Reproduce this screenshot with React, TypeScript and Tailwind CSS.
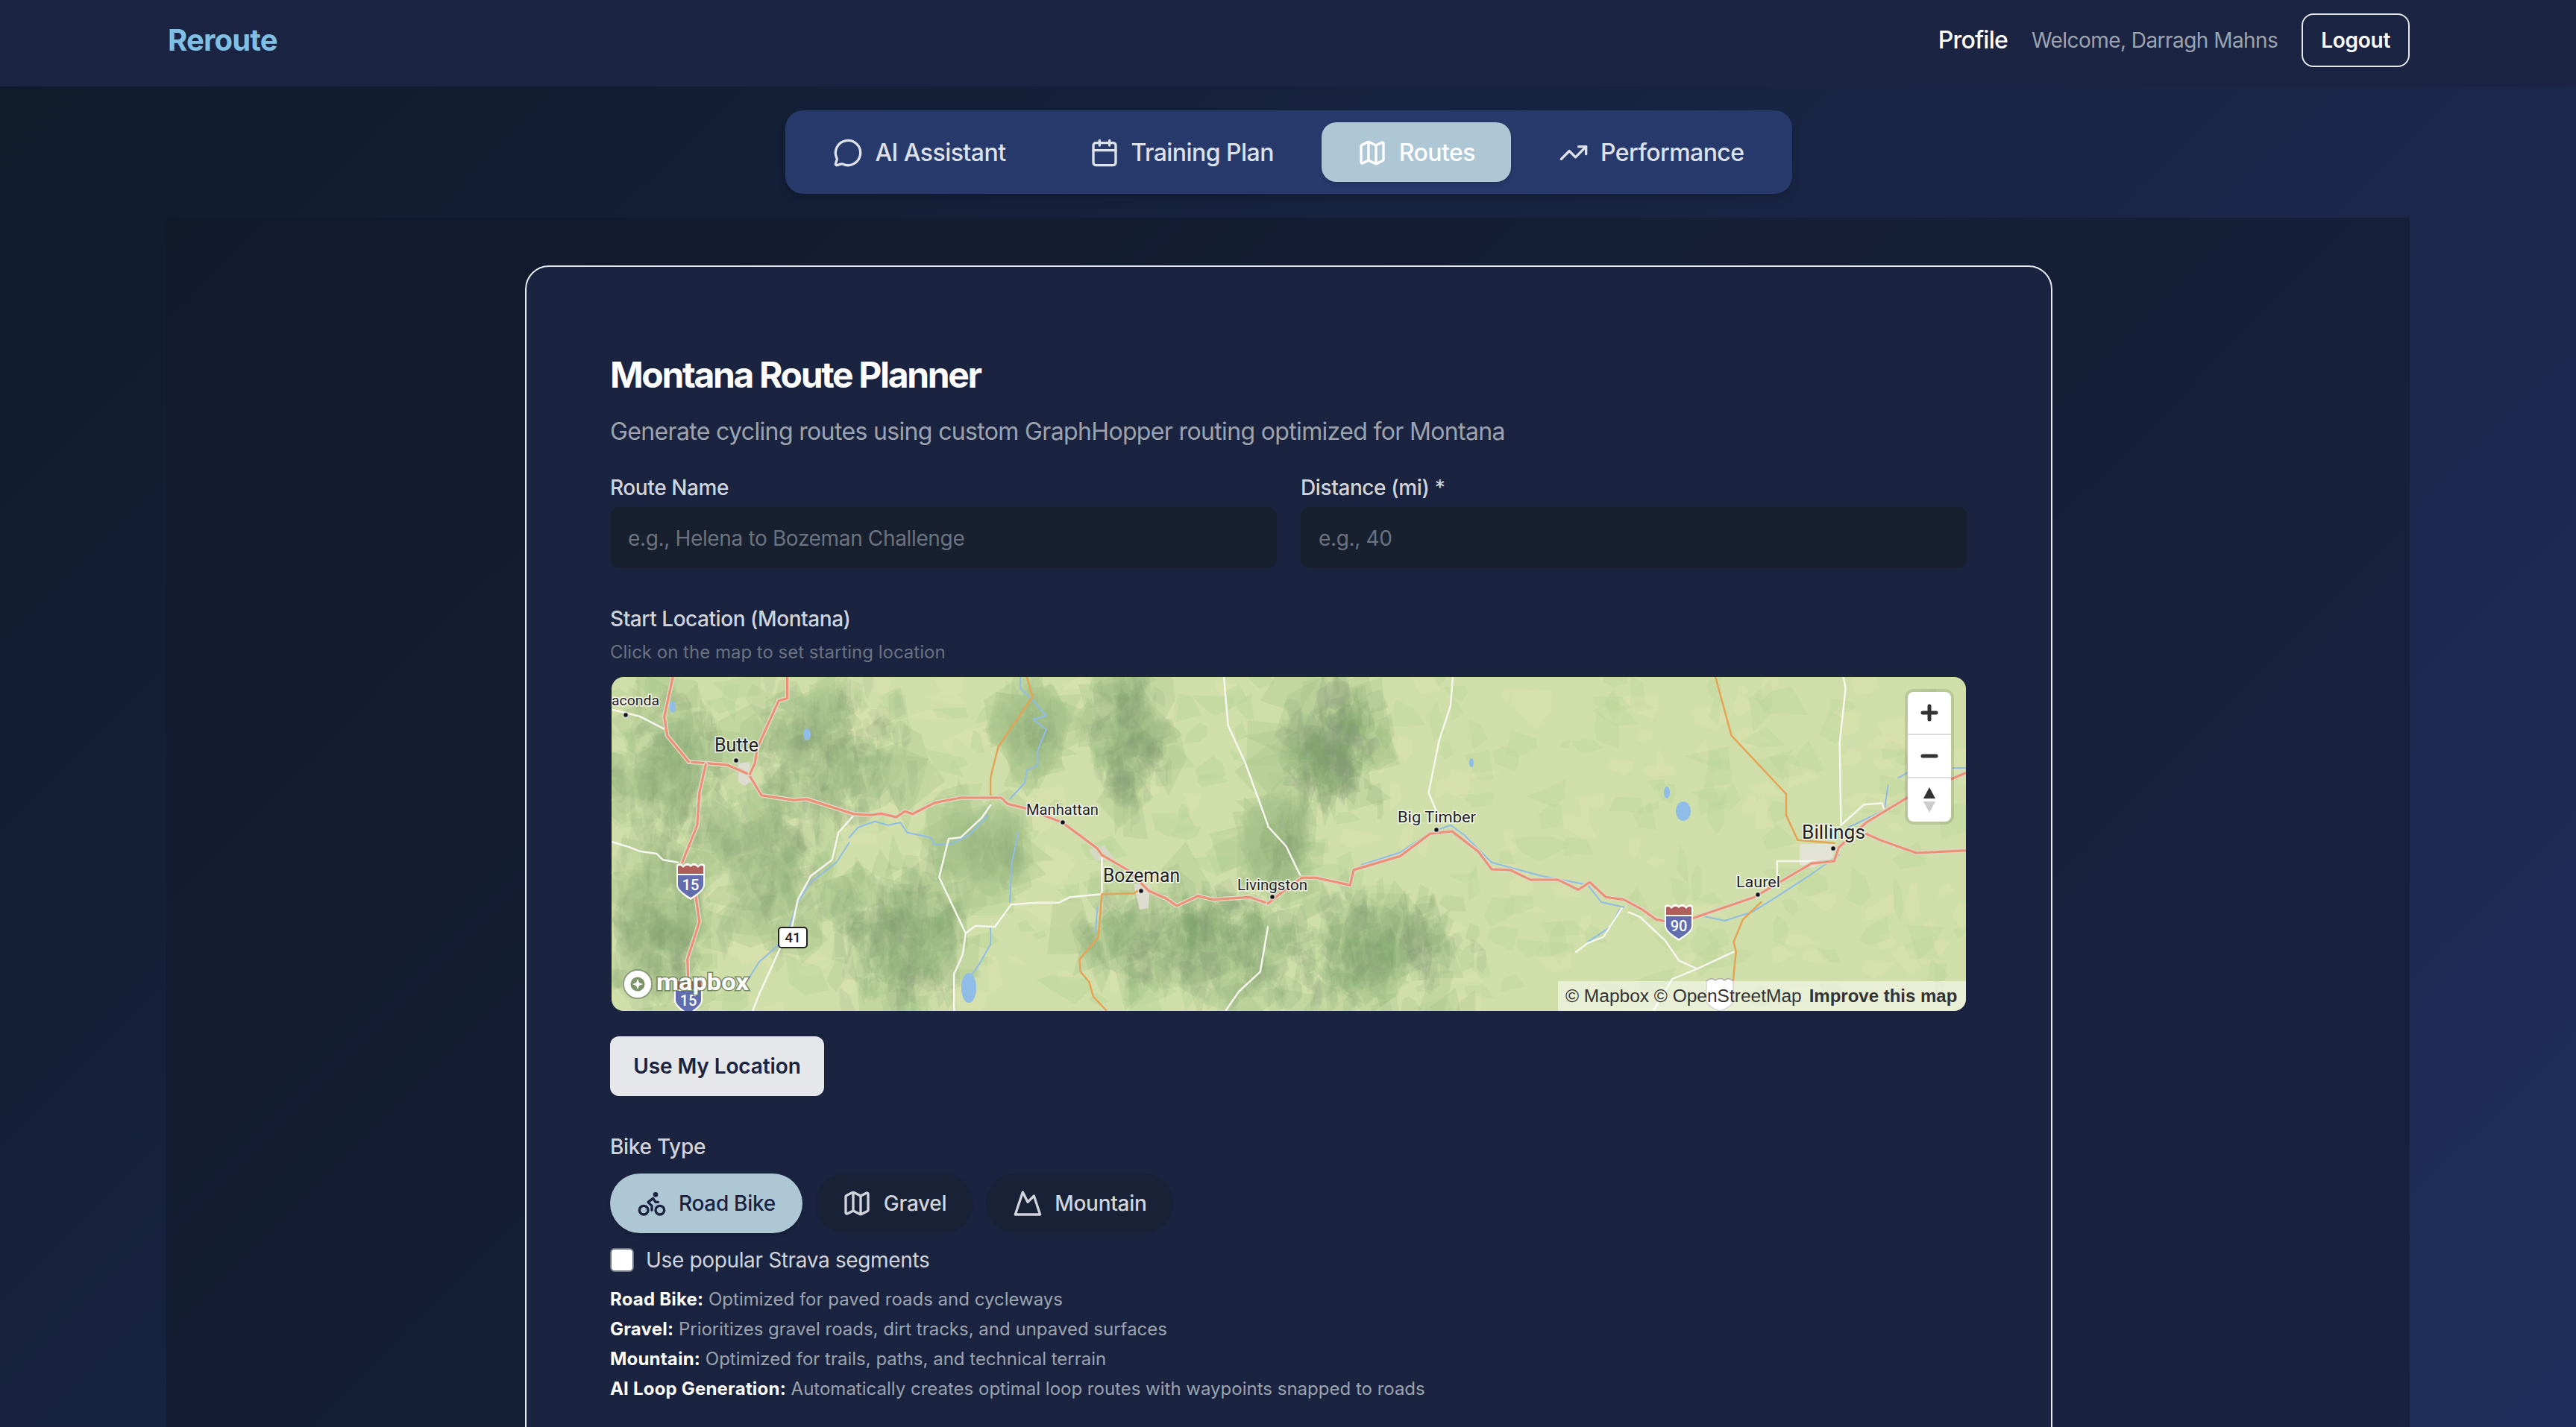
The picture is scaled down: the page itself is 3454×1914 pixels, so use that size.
import React, { useMemo } from 'react'
import { Bike, Calendar, Map as MapIcon, MessageCircle, Mountain, TrendingUp } from 'lucide-react'

type Pt = [number, number]

// the road traces were read off two crops of the map, so each gets its own scale
const west = (pts: Pt[]) => pts.map(([x, y]) => `${(x / 1.742 - 20).toFixed(1)},${(y / 3 - 18).toFixed(1)}`).join(' ')
const east = (pts: Pt[]) => pts.map(([x, y]) => `${(880 + x / 1.633).toFixed(1)},${(y / 3 - 18).toFixed(1)}`).join(' ')

const motorways = [
  west([[215, 395], [305, 408], [355, 445], [385, 530], [460, 550], [490, 545], [600, 605], [640, 610], [665, 604], [700, 618], [720, 595], [738, 605], [790, 560], [850, 540], [945, 540], [960, 565], [1003, 583], [1088, 640], [1170, 745], [1180, 770], [1240, 830], [1290, 915], [1330, 945], [1355, 975], [1405, 935], [1440, 950], [1525, 940], [1568, 965]]),
  east([[0, 965], [35, 915], [75, 862], [105, 862], [180, 892], [188, 830], [290, 775], [355, 685], [403, 675], [460, 755], [490, 828], [530, 830], [575, 870], [635, 870], [680, 910], [705, 880], [740, 940], [780, 950], [820, 990], [850, 1030], [905, 1050], [930, 1025], [1065, 940], [1190, 805], [1240, 795], [1250, 740], [1310, 640], [1400, 540], [1528, 440]]),
  east([[1310, 685], [1340, 710], [1420, 762], [1528, 752]]),
  west([[178, 54], [158, 215], [165, 290], [215, 395]]),
  west([[445, 54], [445, 140], [425, 150], [375, 340], [370, 400], [358, 445]]),
  west([[255, 405], [240, 520], [235, 650], [200, 800]]),
  west([[230, 915], [240, 1040], [212, 1190], [215, 1320]]),
]

const secondary = [
  west([[1005, 54], [1018, 135], [938, 335], [920, 460], [920, 540]]),
  west([[1272, 905], [1255, 925], [1180, 928], [1172, 1100], [1128, 1190], [1130, 1240], [1150, 1280], [1160, 1340], [1190, 1395]]),
  east([[980, 54], [1015, 290], [1135, 525], [1135, 610], [1160, 710], [1240, 722]]),
  east([[1080, 960], [1040, 1030], [1020, 1120], [1025, 1160], [1018, 1290]]),
]

const minorRoads = [
  west([[36, 718], [75, 738], [100, 755], [140, 765], [155, 790], [190, 800]]),
  west([[36, 185], [100, 212], [160, 265]]),
  west([[600, 612], [565, 680], [550, 790], [500, 855], [470, 950], [455, 1070], [430, 1140], [380, 1330], [365, 1395]]),
  west([[920, 570], [900, 620], [850, 700], [822, 705], [800, 860], [862, 1085], [855, 1170], [835, 1250], [835, 1395]]),
  west([[862, 1085], [885, 1055], [930, 1060], [968, 970], [1030, 962], [1080, 962], [1105, 940], [1180, 928]]),
  west([[1180, 770], [1180, 928]]),
  west([[1465, 54], [1475, 250], [1515, 400], [1568, 650]]),
  west([[1568, 1060], [1550, 1240], [1500, 1320], [1470, 1395]]),
  east([[405, 54], [400, 170], [375, 310], [352, 520], [368, 590]]),
  east([[0, 655], [40, 735], [70, 850]]),
  east([[675, 1160], [700, 1125], [735, 1100], [775, 985]]),
  east([[790, 1000], [815, 1020], [870, 1115], [900, 1195], [940, 1228], [1020, 1160]]),
  east([[940, 1228], [885, 1270], [845, 1395]]),
  east([[1260, 54], [1265, 100], [1252, 320], [1255, 650]]),
  east([[1255, 650], [1305, 568], [1345, 562], [1350, 590]]),
  east([[1115, 880], [1115, 795], [1240, 795]]),
]

const rivers = [
  west([[990, 54], [990, 100], [1020, 150], [1050, 210], [1020, 225], [1050, 265], [1030, 350], [1030, 410], [1005, 430], [1000, 480], [965, 545]]),
  west([[590, 700], [610, 660], [650, 635], [680, 650], [710, 640], [725, 680], [780, 700], [790, 730], [830, 725], [870, 690], [915, 610]]),
  west([[590, 720], [560, 800], [500, 880], [470, 960], [450, 1060], [420, 1140], [380, 1200], [350, 1280]]),
  west([[985, 680], [970, 800], [965, 960]]),
  west([[1170, 980], [1165, 1080]]),
  west([[920, 1060], [920, 1130], [890, 1220], [860, 1290]]),
  east([[205, 810], [290, 760], [355, 680], [400, 650], [430, 690], [490, 800], [540, 825], [600, 855], [700, 890], [730, 960], [780, 980]]),
  east([[950, 1015], [1000, 1035], [1060, 1000], [1100, 955], [1180, 860], [1250, 770]]),
  east([[1270, 660], [1350, 590], [1358, 490]]),
  east([[1380, 460], [1400, 440]]),
  east([[1500, 420], [1528, 420]]),
  east([[700, 1120], [750, 1060], [770, 990]]),
]

const cities = [
  { name: 'aconda', x: 0, y: 38, size: 19, w: 64, dot: [19, 51] },
  { name: 'Butte', x: 138, y: 100, size: 25, w: 59, dot: [167, 112] },
  { name: 'Manhattan', x: 556, y: 185, size: 21, w: 97, dot: [605, 195] },
  { name: 'Bozeman', x: 659, y: 275, size: 25, w: 103, dot: [710, 287] },
  { name: 'Livingston', x: 839, y: 286, size: 21, w: 94, dot: [886, 295] },
  { name: 'Big Timber', x: 1054, y: 195, size: 21, w: 105, dot: [1106, 205] },
  { name: 'Billings', x: 1596, y: 217, size: 25, w: 85, dot: [1638, 230] },
  { name: 'Laurel', x: 1508, y: 282, size: 21, w: 59, dot: [1537, 292] },
]

// mountain ranges: centre, spread, how many ridge facets and how dark
const ranges = [
  [70, 130, 85, 140, 110, 0.1],
  [60, 340, 80, 120, 100, 0.1],
  [300, 100, 110, 100, 130, 0.11],
  [215, 250, 80, 130, 90, 0.09],
  [385, 340, 90, 110, 150, 0.13],
  [695, 90, 60, 110, 90, 0.12],
  [965, 95, 75, 95, 140, 0.16],
  [770, 350, 150, 85, 180, 0.13],
  [1010, 370, 170, 90, 180, 0.13],
  [570, 70, 40, 60, 30, 0.08],
  [895, 225, 50, 60, 40, 0.08],
  [500, 230, 60, 50, 24, 0.06],
]

function buildTerrain() {
  let seed = 41
  const rnd = () => {
    seed = (seed * 16807) % 2147483647
    return seed / 2147483647
  }
  const facet = (cx: number, cy: number, rx: number, ry: number) => {
    const n = 4 + Math.floor(rnd() * 3)
    const pts: string[] = []
    for (let i = 0; i < n; i++) {
      const a = ((i + rnd() * 0.6) / n) * Math.PI * 2
      const r = 0.4 + rnd() * 0.8
      pts.push(`${(cx + Math.cos(a) * rx * r).toFixed(0)},${(cy + Math.sin(a) * ry * r).toFixed(0)}`)
    }
    return pts.join(' ')
  }
  const patches: { pts: string; fill: string; opacity: number }[] = []
  for (let i = 0; i < 420; i++) {
    const light = rnd() > 0.62
    const x = rnd() * 1816
    // the west of the map is greener than the plains in the east
    const green = x < 1000 ? 0.5 : 0.36
    patches.push({
      pts: facet(x, rnd() * 448, 10 + rnd() * 30, 8 + rnd() * 24),
      fill: light ? '#dbe0ae' : '#b9d699',
      opacity: light ? 0.4 : green,
    })
  }
  // soft base under each range, so the ridges sit on mid green and not on the plain
  for (const [cx, cy, rx, ry] of ranges) {
    for (let i = 0; i < 34; i++) {
      const gx = (rnd() + rnd() - 1) * rx * 1.1
      const gy = (rnd() + rnd() - 1) * ry * 1.1
      patches.push({ pts: facet(cx + gx, cy + gy, 22 + rnd() * 34, 24 + rnd() * 38), fill: '#a4c58b', opacity: 0.3 })
    }
  }
  for (const [cx, cy, rx, ry, count, dark] of ranges) {
    for (let i = 0; i < count; i++) {
      const gx = (rnd() + rnd() - 1) * rx
      const gy = (rnd() + rnd() - 1) * ry
      patches.push({
        pts: facet(cx + gx, cy + gy, 6 + rnd() * 16, 12 + rnd() * 26),
        fill: rnd() > 0.3 ? '#7f9f6c' : '#84917a',
        opacity: dark,
      })
    }
  }
  return patches
}

function Shield({ x, y, label }: { x: number; y: number; label: string }) {
  return (
    <g transform={`translate(${x} ${y})`}>
      <path d="M-19 -19 Q-14 -23 -10 -18 Q-5 -24 0 -19 Q5 -24 10 -18 Q14 -23 19 -19 V8 Q19 16 0 28 Q-19 16 -19 8 Z" fill="#fff" />
      <path d="M-17 -5 V8 Q-17 15 0 25 Q17 15 17 8 V-5 Z" fill="#626db0" />
      <path d="M-17 -7 V-17 Q-13 -20 -10 -15 Q-5 -21 0 -16 Q5 -21 10 -15 Q13 -20 17 -17 V-7 Z" fill="#b05e5c" />
      <text x="0" y="15" textAnchor="middle" fontSize="20" fontFamily="Roboto, sans-serif" fontWeight="500" fill="#fff">
        {label}
      </text>
    </g>
  )
}

function TerrainMap() {
  const patches = useMemo(buildTerrain, [])
  const line = 'fill-none [stroke-linejoin:round] [stroke-linecap:round]'
  return (
    <svg viewBox="0 0 1816 448" className="block h-[448px] w-[1816px]">
      <rect width="1816" height="448" fill="#d0dfa9" />
      {patches.map((p, i) => (
        <polygon key={i} points={p.pts} fill={p.fill} opacity={p.opacity} />
      ))}
      {rivers.map((pts, i) => (
        <polyline key={i} points={pts} className={line} stroke="#8fbde8" strokeWidth="2" />
      ))}
      <ellipse cx="262" cy="77" rx="5" ry="8" fill="#8fbde8" />
      <ellipse cx="479" cy="417" rx="10" ry="20" fill="#8fbde8" />
      <ellipse cx="1437" cy="180" rx="10" ry="13" fill="#8fbde8" />
      <ellipse cx="1415" cy="155" rx="4" ry="8" fill="#8fbde8" />
      <ellipse cx="1153" cy="115" rx="3" ry="6" fill="#8fbde8" />
      <ellipse cx="82" cy="40" rx="4" ry="8" fill="#8fbde8" />
      <polygon points="170,116 185,114 188,140 178,146 170,140" fill="#dcdcd0" />
      <polygon points="640,232 660,226 676,246 650,246" fill="#d6d8c6" />
      <polygon points="700,278 722,278 720,310 708,312" fill="#dcdcd0" />
      <polygon points="1593,224 1640,224 1638,242 1610,256 1593,252" fill="#e2e2d6" />
      {minorRoads.map((pts, i) => (
        <polyline key={i} points={pts} className={line} stroke="#f6f6ee" strokeWidth="2.5" />
      ))}
      {secondary.map((pts, i) => (
        <polyline key={i} points={pts} className={line} stroke="#e5a355" strokeWidth="2.5" />
      ))}
      {motorways.map((pts, i) => (
        <g key={i}>
          <polyline points={pts} className={line} stroke="#dcd6c4" strokeWidth="6" />
          <polyline points={pts} className={line} stroke="#ec8f73" strokeWidth="3" />
        </g>
      ))}
      <Shield x={106} y={271} label="15" />
      <Shield x={103} y={426} label="15" />
      <Shield x={1431} y={326} label="90" />
      <rect x="224" y="336" width="38" height="27" rx="4" fill="#fff" stroke="#222" strokeWidth="2" />
      <text x="243" y="356" textAnchor="middle" fontSize="19" fontFamily="Roboto, sans-serif" fontWeight="500" fill="#222">
        41
      </text>
      <path d="M1468 408 Q1474 402 1480 407 Q1487 402 1492 407 Q1498 402 1504 408 V432 Q1504 442 1486 448 Q1468 442 1468 432 Z" fill="#fff" stroke="#aaa" strokeWidth="1.5" />
      {cities.map((c) => (
        <g key={c.name}>
          <circle cx={c.dot[0]} cy={c.dot[1]} r="3.5" fill="#111" stroke="#fff" strokeOpacity="0.6" strokeWidth="2" />
          <text
            x={c.x}
            y={c.y}
            textLength={c.w}
            lengthAdjust="spacingAndGlyphs"
            fontSize={c.size}
            fontFamily="Roboto, sans-serif"
            fill="#222"
            stroke="#fff"
            strokeOpacity="0.8"
            strokeWidth="3"
            className="[paint-order:stroke]"
          >
            {c.name}
          </text>
        </g>
      ))}
      <circle cx="35" cy="412" r="19" fill="#fff" stroke="#5c6f50" strokeOpacity="0.6" strokeWidth="2" />
      <circle cx="35" cy="412" r="9.5" fill="#7d9468" />
      <path d="M35 405 L37 410 L42 412 L37 414 L35 419 L33 414 L28 412 L33 410 Z" fill="#fff" />
      <text
        x="60"
        y="420"
        textLength="124"
        lengthAdjust="spacingAndGlyphs"
        fontSize="31"
        fontFamily="Roboto, sans-serif"
        fontWeight="700"
        fill="#fff"
        stroke="#5c6f50"
        strokeOpacity="0.75"
        strokeWidth="3"
        className="[paint-order:stroke]"
      >
        mapbox
      </text>
    </svg>
  )
}

function MapControls() {
  return (
    <div className="absolute top-[20px] right-[20px] flex w-[58px] flex-col overflow-hidden rounded-[8px] bg-white shadow-[0_0_0_4px_rgba(0,0,0,0.1)]">
      <div className="flex h-[58px] items-center justify-center border-b-2 border-[#ddd]">
        <svg viewBox="0 0 24 24" className="h-[24px] w-[24px]" fill="none" stroke="#333" strokeWidth="5" strokeLinecap="round">
          <path d="M12 3v18M3 12h18" />
        </svg>
      </div>
      <div className="flex h-[58px] items-center justify-center border-b-2 border-[#ddd]">
        <svg viewBox="0 0 24 24" className="h-[24px] w-[24px]" fill="none" stroke="#333" strokeWidth="5" strokeLinecap="round">
          <path d="M3 12h18" />
        </svg>
      </div>
      <div className="flex h-[58px] items-center justify-center">
        <svg viewBox="0 0 16 34" className="h-[34px] w-[16px]">
          <path d="M8 0 L16 15 H0 Z" fill="#333" />
          <path d="M8 34 L16 19 H0 Z" fill="#ccc" />
        </svg>
      </div>
    </div>
  )
}

const tabs = [
  { label: 'AI Assistant', icon: MessageCircle },
  { label: 'Training Plan', icon: Calendar },
  { label: 'Routes', icon: MapIcon, active: true },
  { label: 'Performance', icon: TrendingUp },
]

const bikeTypes = [
  { label: 'Road Bike', icon: Bike, active: true },
  { label: 'Gravel', icon: MapIcon },
  { label: 'Mountain', icon: Mountain },
]

const bikeNotes = [
  ['Road Bike:', 'Optimized for paved roads and cycleways'],
  ['Gravel:', 'Prioritizes gravel roads, dirt tracks, and unpaved surfaces'],
  ['Mountain:', 'Optimized for trails, paths, and technical terrain'],
  ['AI Loop Generation:', 'Automatically creates optimal loop routes with waypoints snapped to roads'],
]

export default function App() {
  return (
    <div className="flex h-[1914px] flex-col overflow-hidden bg-[linear-gradient(135deg,#0f1a2a_0%,#182544_50%,#1f2d5c_100%)] font-['Inter',sans-serif]">
      <header className="h-[116px] shrink-0 bg-[#1b2543] pb-[8px]">
        <div className="mx-auto flex h-full w-[3008px] items-center justify-between pl-[2px]">
          <span className="text-[40px] font-bold tracking-[-0.8px] text-[#7fbfe3]">Reroute</span>
          <div className="flex items-center">
            <span className="mr-[32px] text-[32px] font-medium tracking-[-0.8px] text-white">Profile</span>
            <span className="mr-[32px] text-[28px] tracking-[-0.55px] text-[#9ca3af]">Welcome, Darragh Mahns</span>
            <button className="h-[72px] rounded-[16px] border-2 border-[#e5e7eb] px-[24px] text-[28px] font-semibold tracking-[-0.3px] text-white">
              Logout
            </button>
          </div>
        </div>
      </header>

      <nav className="flex shrink-0 justify-center py-[32px] pl-[2px]">
        <div className="flex gap-[16px] rounded-[24px] bg-[#273a6b] p-[16px] shadow-lg">
          {tabs.map(({ label, icon: Icon, active }) => (
            <button
              key={label}
              className={`flex h-[80px] items-center gap-[16px] rounded-[20px] px-[48px] pt-[2px] text-[32px] font-medium tracking-[-0.55px] ${
                active ? 'bg-[#aec7d5] text-white shadow-md' : 'text-[#dde1ea]'
              }`}
            >
              <Icon className="h-[40px] w-[40px]" />
              {label}
            </button>
          ))}
        </div>
      </nav>

      <main className="mx-auto w-[3008px] grow bg-[#111827]/50 pt-[64px]">
        <div className="ml-[481px] h-[1700px] w-[2048px] rounded-[32px] border-2 border-[#e5e7eb] bg-[#1a2340] px-[112px] pt-[113px]">
          <h1 className="text-[48px] leading-[64px] font-bold tracking-[-2.35px] text-white">Montana Route Planner</h1>
          <p className="mt-[20px] text-[32px] leading-[48px] tracking-[-0.65px] text-[#9ca3af]">
            Generate cycling routes using custom GraphHopper routing optimized for Montana
          </p>

          <div className="mt-[31px] grid grid-cols-2 gap-[32px]">
            <div>
              <label className="block text-[28px] leading-[40px] font-medium tracking-[-0.4px] text-[#d1d5db]">Route Name</label>
              <input
                placeholder="e.g., Helena to Bozeman Challenge"
                className="mt-[6px] block h-[82px] w-full rounded-[12px] bg-[#182030] px-[24px] pt-[2px] text-[28px] tracking-[-0.35px] text-white placeholder:text-[#6b7280]"
              />
            </div>
            <div>
              <label className="block text-[28px] leading-[40px] font-medium tracking-[-0.4px] text-[#d1d5db]">Distance (mi) *</label>
              <input
                placeholder="e.g., 40"
                className="mt-[6px] block h-[82px] w-full rounded-[12px] bg-[#182030] px-[24px] pt-[2px] text-[28px] tracking-[-0.35px] text-white placeholder:text-[#6b7280]"
              />
            </div>
          </div>

          <label className="mt-[48px] block text-[28px] leading-[40px] font-medium tracking-[-0.45px] text-[#d1d5db]">Start Location (Montana)</label>
          <p className="mt-[9px] text-[24px] leading-[32px] text-[#6b7280]">Click on the map to set starting location</p>

          <div className="mt-[15px] p-[2px]">
            <div className="relative h-[448px] overflow-hidden rounded-[16px]">
              <TerrainMap />
              <MapControls />
              <div className="absolute right-0 bottom-0 flex h-[40px] w-[547px] items-center gap-[10px] bg-white/50 pl-[10px] font-['Liberation_Sans',sans-serif] text-[24.5px] text-[#333]">
                <span>© Mapbox © OpenStreetMap</span>
                <span className="text-[24px] font-bold">Improve this map</span>
              </div>
            </div>
          </div>

          <button className="mt-[32px] block h-[80px] w-[287px] rounded-[12px] bg-[#e5e7eb] text-[28px] font-semibold tracking-[-0.1px] text-[#1a2340]">
            Use My Location
          </button>

          <label className="mt-[48px] block text-[28px] leading-[40px] font-medium tracking-[-0.3px] text-[#d1d5db]">Bike Type</label>
          <div className="mt-[16px] flex gap-[17px]">
            {bikeTypes.map(({ label, icon: Icon, active }) => (
              <button
                key={label}
                className={`flex h-[80px] items-center gap-[16px] rounded-full px-[36px] text-[28px] font-medium tracking-[-0.3px] ${
                  active ? 'bg-[#aec7d5] text-[#1a2340] shadow-md' : 'bg-[#182136] text-[#d1d5db]'
                }`}
              >
                <Icon className="h-[40px] w-[40px]" />
                {label}
              </button>
            ))}
          </div>

          <div className="mt-[16px] flex h-[40px] items-center gap-[16px]">
            <span className="h-[32px] w-[32px] rounded-[6px] border-2 border-[#6b7280] bg-white" />
            <span className="text-[28px] tracking-[-0.35px] text-[#d1d5db]">Use popular Strava segments</span>
          </div>

          <div className="mt-[13px]">
            {bikeNotes.map(([name, text]) => (
              <p key={name} className="text-[24px] leading-[40px] text-[#9ca3af]">
                <strong className="font-bold tracking-[0.2px] text-white">{name}</strong> {text}
              </p>
            ))}
          </div>
        </div>
      </main>
    </div>
  )
}
